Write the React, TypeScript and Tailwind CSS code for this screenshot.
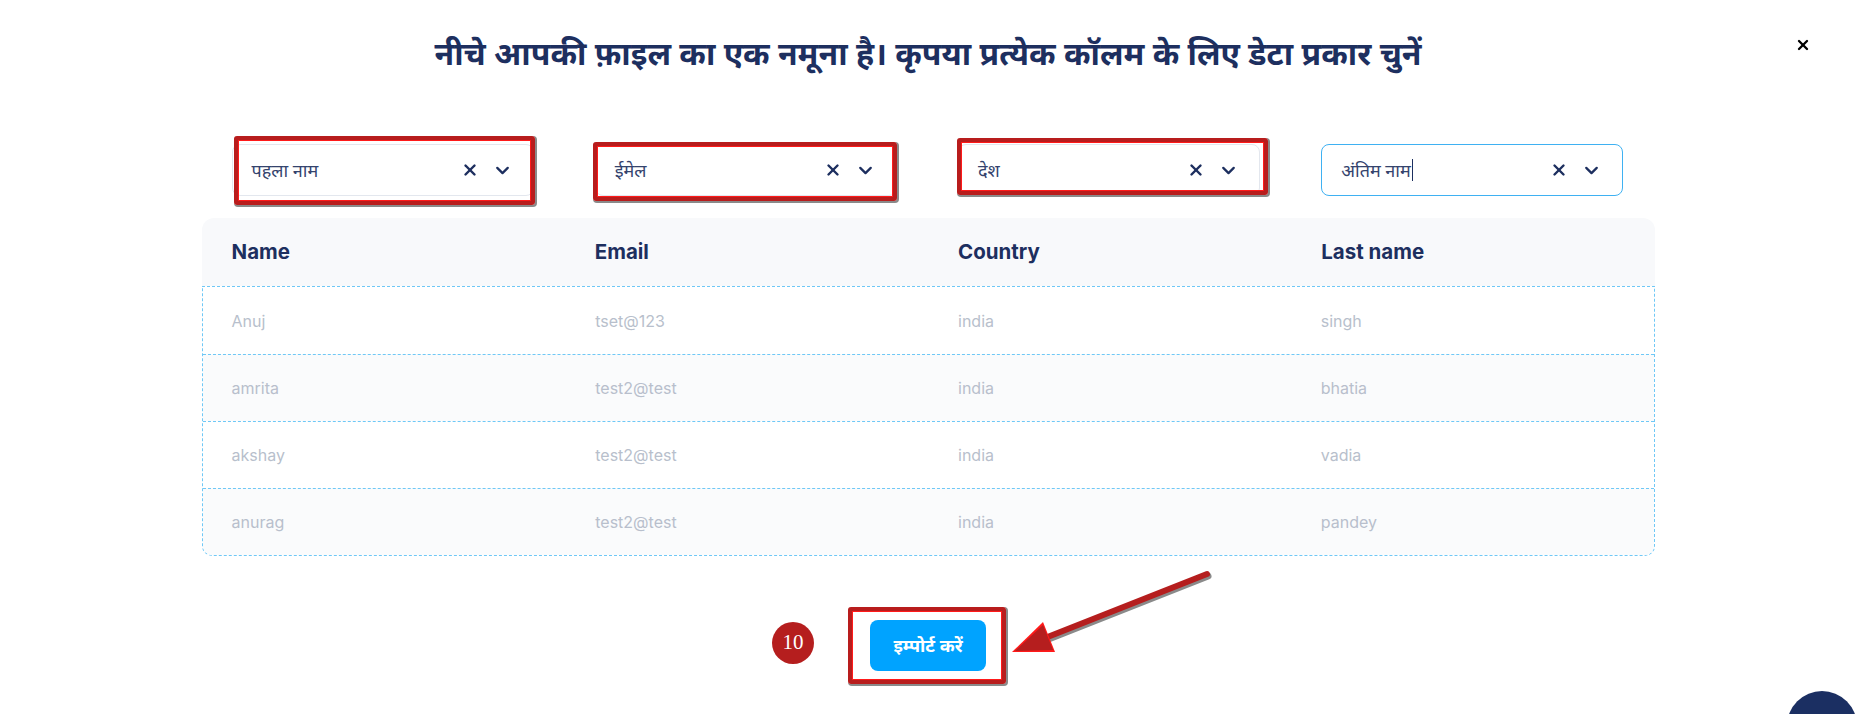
import { X, ChevronDown } from "lucide-react";

const columns = [
  { label: "पहला नाम", header: "Name", box: "left-[2px] right-[-1px] top-[-8px] bottom-[-9px]" },
  { label: "ईमेल", header: "Email", box: "left-[-2px] right-[0px] top-[-2px] bottom-[-5px]" },
  { label: "देश", header: "Country", box: "left-[-1px] right-[-8px] top-[-6px] bottom-[1px]" },
  { label: "अंतिम नाम", header: "Last name", box: "" },
];

const rows = [
  ["Anuj", "tset@123", "india", "singh"],
  ["amrita", "test2@test", "india", "bhatia"],
  ["akshay", "test2@test", "india", "vadia"],
  ["anurag", "test2@test", "india", "pandey"],
];

const hindi = "font-['Noto_Sans','Noto_Sans_Devanagari',sans-serif]";

function Select({ label, box, focused }: { label: string; box: string; focused: boolean }) {
  return (
    <div className="relative w-[302px]">
      <div
        className={`flex h-[52px] items-center rounded-[8px] border bg-white pl-[19px] pr-[20px] ${
          focused ? "border-[#3fb1f2]" : "border-[#e3e7ee]"
        }`}
      >
        <span className={`${hindi} text-[18px] text-[#34436d]`}>{label}</span>
        {focused && <span className="ml-[1px] h-[22px] w-[1px] bg-[#1d2f5f]" />}
        <div className="ml-auto flex items-center gap-[13px] text-[#1d2f5f]">
          <X size={18} strokeWidth={3.2} />
          <ChevronDown size={21} strokeWidth={2.6} />
        </div>
      </div>
      {box && (
        <div
          className={`pointer-events-none absolute ${box} rounded-[3px] border-[4px] border-[#b81d1d] shadow-[inset_0_0_0_1px_#ff1a1a,1px_1px_0_1px_#8a8a8a]`}
        />
      )}
    </div>
  );
}

export default function App() {
  return (
    <div className="relative h-[714px] w-full overflow-hidden bg-white pt-[34px] font-['Inter',sans-serif]">
      <h1 className={`${hindi} h-[38px] text-center text-[32px] font-bold leading-[38px] text-[#1d2f5f]`}>
        नीचे आपकी फ़ाइल का एक नमूना है। कृपया प्रत्येक कॉलम के लिए डेटा प्रकार चुनें
      </h1>

      <button className="absolute right-[45px] top-[37px] text-black">
        <X size={16} strokeWidth={3.5} />
      </button>

      <div className="mx-auto w-[1453px]">
        <div className="mt-[72px] grid grid-cols-4">
          {columns.map((c, i) => (
            <div key={c.header} className="pl-[30px]">
              <Select label={c.label} box={c.box} focused={i === 3} />
            </div>
          ))}
        </div>

        <div className="mt-[22px]">
          <div className="grid h-[68px] grid-cols-4 items-center rounded-t-[12px] bg-[#f8f9fb]">
            {columns.map((c) => (
              <div key={c.header} className="pl-[30px] text-[20.5px] font-bold text-[#1d2f5f]">
                {c.header}
              </div>
            ))}
          </div>
          <div className="overflow-hidden rounded-b-[10px] border border-dashed border-[#6fc8f6]">
            {rows.map((r, i) => (
              <div
                key={i}
                className={`grid h-[67px] grid-cols-4 items-center ${
                  i > 0 ? "border-t border-dashed border-[#6fc8f6]" : ""
                } ${i % 2 === 1 ? "bg-[#fafbfc]" : "bg-white"}`}
              >
                {r.map((cell, j) => (
                  <div key={j} className={`${j === 0 ? "pl-[29px]" : "pl-[30px]"} text-[16px] text-[#b8bfcc]`}>
                    {cell}
                  </div>
                ))}
              </div>
            ))}
          </div>
        </div>

        <div className="mt-[64px] flex justify-center">
          <div className="relative">
            <button className={`${hindi} h-[51px] w-[116px] rounded-[8px] bg-[#00a3ff] text-[18px] font-bold text-white`}>
              इम्पोर्ट करें
            </button>
            <div className="pointer-events-none absolute bottom-[-13px] left-[-22px] right-[-20px] top-[-13px] rounded-[3px] border-[4px] border-[#b81d1d] shadow-[inset_0_0_0_1px_#ff1a1a,1px_1px_0_1px_#8a8a8a]" />
            <div className="absolute left-[-98px] top-[2px] flex h-[42px] w-[42px] items-center justify-center rounded-full bg-[#b51e1e] font-['Liberation_Serif',serif] text-[21px] text-white">
              10
            </div>
          </div>
        </div>
      </div>

      <svg className="pointer-events-none absolute left-0 top-0" width="1856" height="714">
        <line x1="1207" y1="574" x2="1045" y2="638" stroke="#8a8a8a" strokeWidth="7" strokeLinecap="round" transform="translate(1 2)" />
        <line x1="1207" y1="574" x2="1045" y2="638" stroke="#b51e1e" strokeWidth="6" strokeLinecap="round" />
        <polygon points="1012,652 1043,622 1055,652" fill="#ff1a1a" />
        <polygon points="1015,651 1043,625 1053,650" fill="#b51e1e" />
      </svg>

      <div className="absolute left-[1787px] top-[691px] h-[70px] w-[70px] rounded-full bg-[#1b2f62]" />
    </div>
  );
}
